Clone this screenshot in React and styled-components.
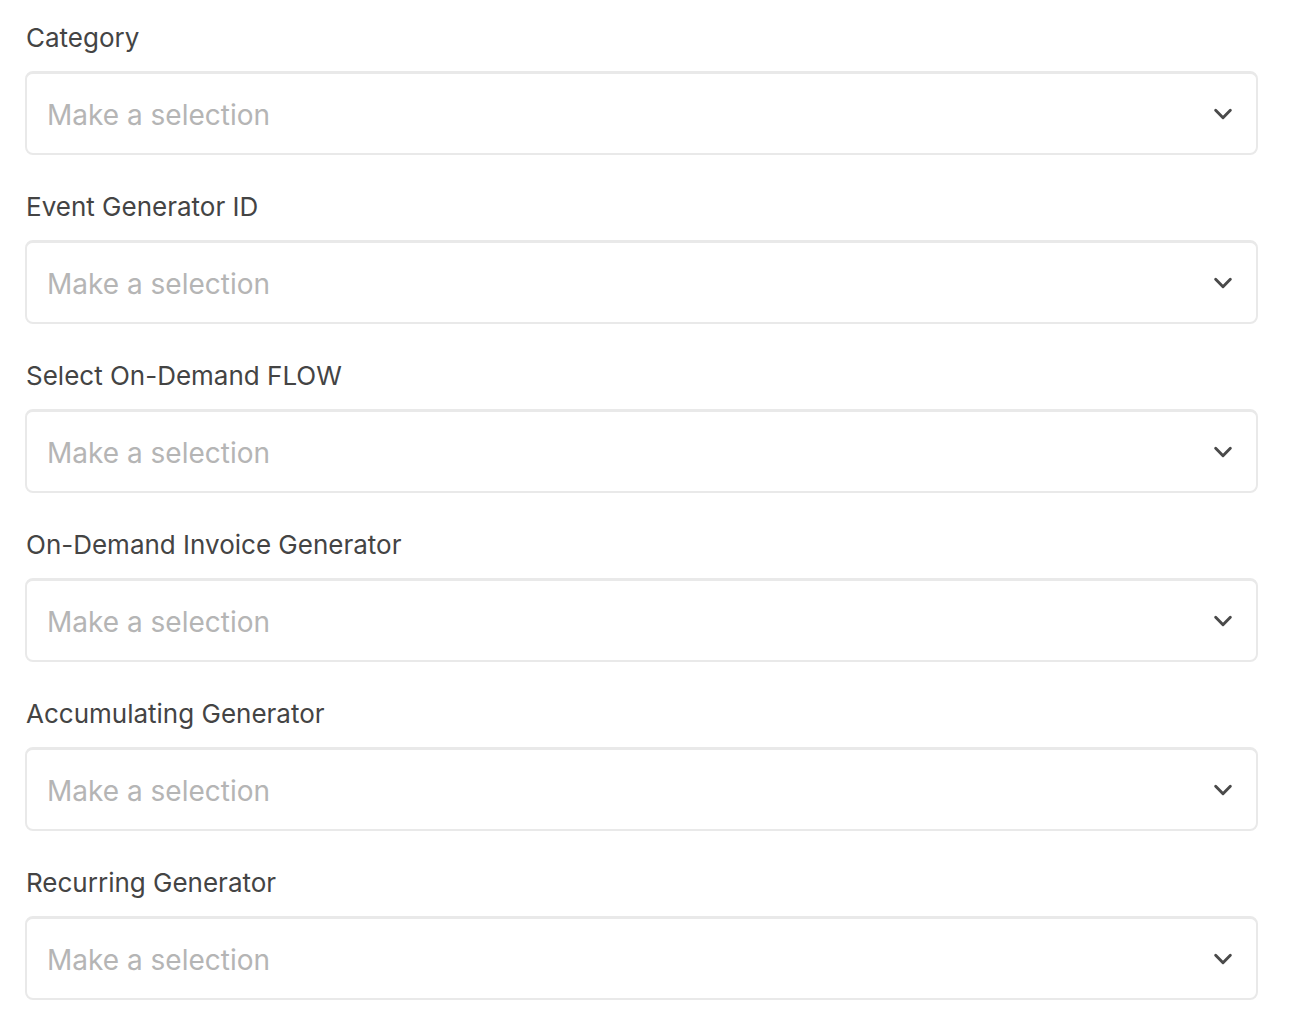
import React from "react";
import styled, { createGlobalStyle } from "styled-components";

const Global = createGlobalStyle`
  html, body { margin: 0; padding: 0; background: #ffffff; }
  body { font-family: Inter, "Noto Sans", sans-serif; -webkit-font-smoothing: antialiased; }
`;

const Form = styled.div`
  display: flex;
  flex-direction: column;
  gap: 36px;
  padding: 22px 38px 0 25px;
`;

const Field = styled.div`
  display: flex;
  flex-direction: column;
  gap: 17px;
`;

const Label = styled.label`
  font-size: 26px;
  line-height: 32px;
  color: #444444;
  padding-left: 1px;
`;

const Select = styled.div`
  box-sizing: border-box;
  height: 84px;
  display: flex;
  align-items: center;
  justify-content: space-between;
  padding: 0 22px 0 20px;
  border: 2px solid #e9e9e9;
  border-top-width: 3px;
  border-radius: 8px;
  background: #fff;
`;

const Placeholder = styled.span`
  font-size: 28px;
  line-height: 34px;
  padding-top: 3px;
  color: #b5b5b5;
`;

const Chevron = styled.svg`
  width: 22px;
  height: 22px;
  color: #4a4a4a;
`;

const fields = [
  "Category",
  "Event Generator ID",
  "Select On-Demand FLOW",
  "On-Demand Invoice Generator",
  "Accumulating Generator",
  "Recurring Generator",
];

export default function App() {
  return (
    <>
      <Global />
      <Form>
        {fields.map((f) => (
          <Field key={f}>
            <Label>{f}</Label>
            <Select>
              <Placeholder>Make a selection</Placeholder>
              <Chevron viewBox="0 0 24 24" fill="none">
                <path d="M4 8l8 8 8-8" stroke="currentColor" strokeWidth="3.2" strokeLinecap="round" strokeLinejoin="round" />
              </Chevron>
            </Select>
          </Field>
        ))}
      </Form>
    </>
  );
}
